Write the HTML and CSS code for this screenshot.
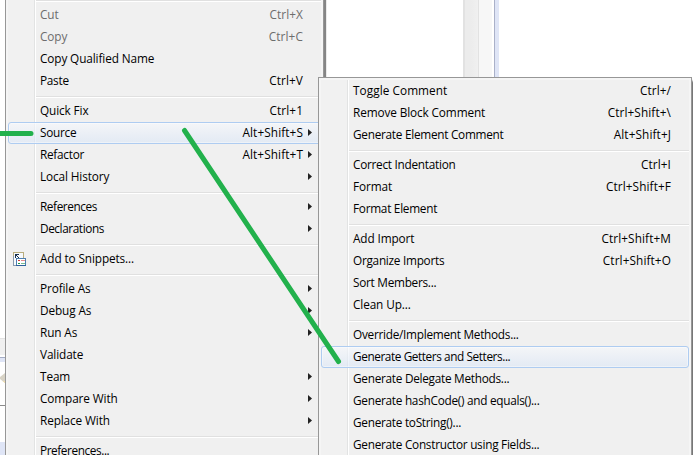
FILE: index.html
```html
<!DOCTYPE html>
<html lang="en">
<head>
<meta charset="utf-8">
<title>Source menu</title>
<link rel="stylesheet" href="styles.css">
</head>
<body>
<div class="desktop">
  <div class="editor-edge"><i class="scroll-end"></i><i class="sash"></i><i class="tab"></i><i class="foot"></i></div>
  <div class="scrollbar"></div>
  <div class="divider"></div>

  <div class="menu main-menu">
    <hr>
    <div class="item off"><span>Cut</span><kbd>Ctrl+X</kbd></div>
    <div class="item off"><span>Copy</span><kbd>Ctrl+C</kbd></div>
    <div class="item"><span>Copy Qualified Name</span></div>
    <div class="item snug"><span>Paste</span><kbd>Ctrl+V</kbd></div>
    <hr>
    <div class="item"><span>Quick Fix</span><kbd>Ctrl+1</kbd></div>
    <div class="item sub hot snug"><span>Source</span><kbd>Alt+Shift+S</kbd></div>
    <div class="item sub snug"><span>Refactor</span><kbd>Alt+Shift+T</kbd></div>
    <div class="item sub"><span>Local History</span></div>
    <hr>
    <div class="item sub tight"><span>References</span></div>
    <div class="item sub tight"><span>Declarations</span></div>
    <hr>
    <div class="item">
      <svg class="icon" width="14" height="15" viewBox="0 0 14 15" shape-rendering="crispEdges">
        <path d="M.5 13.5V.5h10V6" fill="#fff" stroke="#b9ad7d"/>
        <path d="M.5 4v9.500h3" fill="none" stroke="#8a9aae"/>
        <path d="M1 1h9v5H3v7H1z" fill="#f6f9fd"/>
        <path d="M2 2h4v1H4v1h1v1h1v1H5V5H4V4H3v2H2zM6 6h1v1H6z" fill="#17304f"/>
        <path d="M3.500 6.500h9v7h-9z" fill="#fff" stroke="#4d7eae"/>
        <path d="M3 13h10v1H3z" fill="#2c629b"/>
        <path d="M5 8h2v1H5z" fill="#d33b3b"/><path d="M8 8h4v1H8z" fill="#e58b8b"/>
        <path d="M5 11h2v1H5z" fill="#23974b"/><path d="M8 11h4v1H8z" fill="#78bd91"/>
      </svg>
      <span>Add to Snippets...</span></div>
    <hr>
    <div class="item sub"><span>Profile As</span></div>
    <div class="item sub"><span>Debug As</span></div>
    <div class="item sub"><span>Run As</span></div>
    <div class="item"><span>Validate</span></div>
    <div class="item sub"><span>Team</span></div>
    <div class="item sub"><span>Compare With</span></div>
    <div class="item sub"><span>Replace With</span></div>
    <hr>
    <div class="item tight"><span>Preferences...</span></div>
  </div>

  <div class="menu source-menu">
    <div class="item wide"><span>Toggle Comment</span><kbd>Ctrl+/</kbd></div>
    <div class="item"><span>Remove Block Comment</span><kbd>Ctrl+Shift+\</kbd></div>
    <div class="item snug"><span>Generate Element Comment</span><kbd>Alt+Shift+J</kbd></div>
    <hr>
    <div class="item snug"><span>Correct Indentation</span><kbd>Ctrl+I</kbd></div>
    <div class="item"><span>Format</span><kbd>Ctrl+Shift+F</kbd></div>
    <div class="item snug"><span>Format Element</span></div>
    <hr>
    <div class="item"><span>Add Import</span><kbd>Ctrl+Shift+M</kbd></div>
    <div class="item snug"><span>Organize Imports</span><kbd>Ctrl+Shift+O</kbd></div>
    <div class="item snug"><span>Sort Members...</span></div>
    <div class="item"><span>Clean Up...</span></div>
    <hr>
    <div class="item snug"><span>Override/Implement Methods...</span></div>
    <div class="item hot tight"><span>Generate Getters and Setters...</span></div>
    <div class="item snug"><span>Generate Delegate Methods...</span></div>
    <div class="item snug"><span>Generate hashCode() and equals()...</span></div>
    <div class="item snug"><span>Generate toString()...</span></div>
    <div class="item snug"><span>Generate Constructor using Fields...</span></div>
  </div>

  <svg class="strokes" width="693" height="455" viewBox="0 0 693 455">
    <path d="M-4 133.500H31M184.500 130.500L338.500 361.500"/>
  </svg>
</div>
</body>
</html>
```
FILE: styles.css
```css
body { margin: 0; overflow: hidden; }
.desktop {
  position: relative; width: 693px; height: 455px; overflow: hidden; background: #fff;
  font: 11.8px/20px "Open Sans", "Noto Sans", sans-serif; color: #000;
}
.editor-edge { position: absolute; left: 0; top: 0; width: 5px; height: 455px; }
.editor-edge i { position: absolute; left: 0; width: 5px; box-sizing: border-box; }
.scroll-end { top: 338px; height: 17px; background: #f0f0f0; border-top: 1px solid #e3e3e3; }
.sash { top: 357px; height: 5px; background: #dfe5f6; border-top: 1px solid #a5adc4; }
.tab { top: 373px; height: 10px; background: #d8d3c6; border-bottom: 2px solid #f0dfae; clip-path: polygon(0 40%, 100% 0, 100% 100%, 0 60%); }
.foot { top: 405px; height: 50px; border-top: 1px solid #8b8b8b; background: linear-gradient(#fff 36px, #dfe5f6 36px); }
.scrollbar {
  position: absolute; left: 463px; top: 0; width: 29px; height: 100%;
  background: linear-gradient(90deg, #e2e2e2 2px, #ececec 2px 8px, #f0f0f0 15px, #e2e2e2 15px 16px, #f7f7f7 16px);
}
.divider { position: absolute; left: 494px; top: 0; width: 5px; height: 100%; box-sizing: border-box; border-left: 1px solid #aab1c9; background: #dfe5f6; }
.menu {
  position: absolute; box-sizing: border-box; padding: 2px; border: 1px solid #979797;
  background: linear-gradient(90deg, #f1f1f1 26px, #e2e3e3 26px 27px, #fff 27px 28px, #f0f0f0 28px) content-box, #f5f5f5;
}
.main-menu { left: 5px; top: -7px; width: 319px; box-shadow: 2px 2px 1px #858585; }
.source-menu { left: 318px; top: 77px; width: 374px; height: 390px; box-shadow: 3px 4px 2px #777; }
.item {
  position: relative; display: flex; justify-content: space-between; box-sizing: border-box;
  height: 22px; padding: 0 18px 0 32px; white-space: pre; letter-spacing: -.12px;
}
.snug { letter-spacing: -.27px; }
.tight { letter-spacing: -.41px; }
.wide { letter-spacing: .06px; }
.item kbd { font: inherit; letter-spacing: .1px; }
.off { color: #6d6d6d; }
.hot::before {
  content: ""; position: absolute; inset: 0; border: 1px solid #aeccf1; border-radius: 3px;
  background: linear-gradient(rgba(246,248,252,.65), rgba(216,229,247,.55)); box-shadow: inset 0 0 0 1px rgba(255,255,255,.4);
}
.hot > * { position: relative; }
.sub::after { content: ""; position: absolute; right: 9px; top: 7px; width: 4px; height: 7px; background: #222; clip-path: polygon(0 0, 100% 50%, 0 100%); }
hr { height: 2px; margin: 4px 0 2px 28px; border: 0; background: linear-gradient(#e0e0e0 50%, #fff 50%); }
.icon { position: absolute; left: 5px; top: 4px; }
.strokes { position: absolute; left: 0; top: 0; }
.strokes path { fill: none; stroke: #22b14c; stroke-width: 5; stroke-linecap: round; }
```
